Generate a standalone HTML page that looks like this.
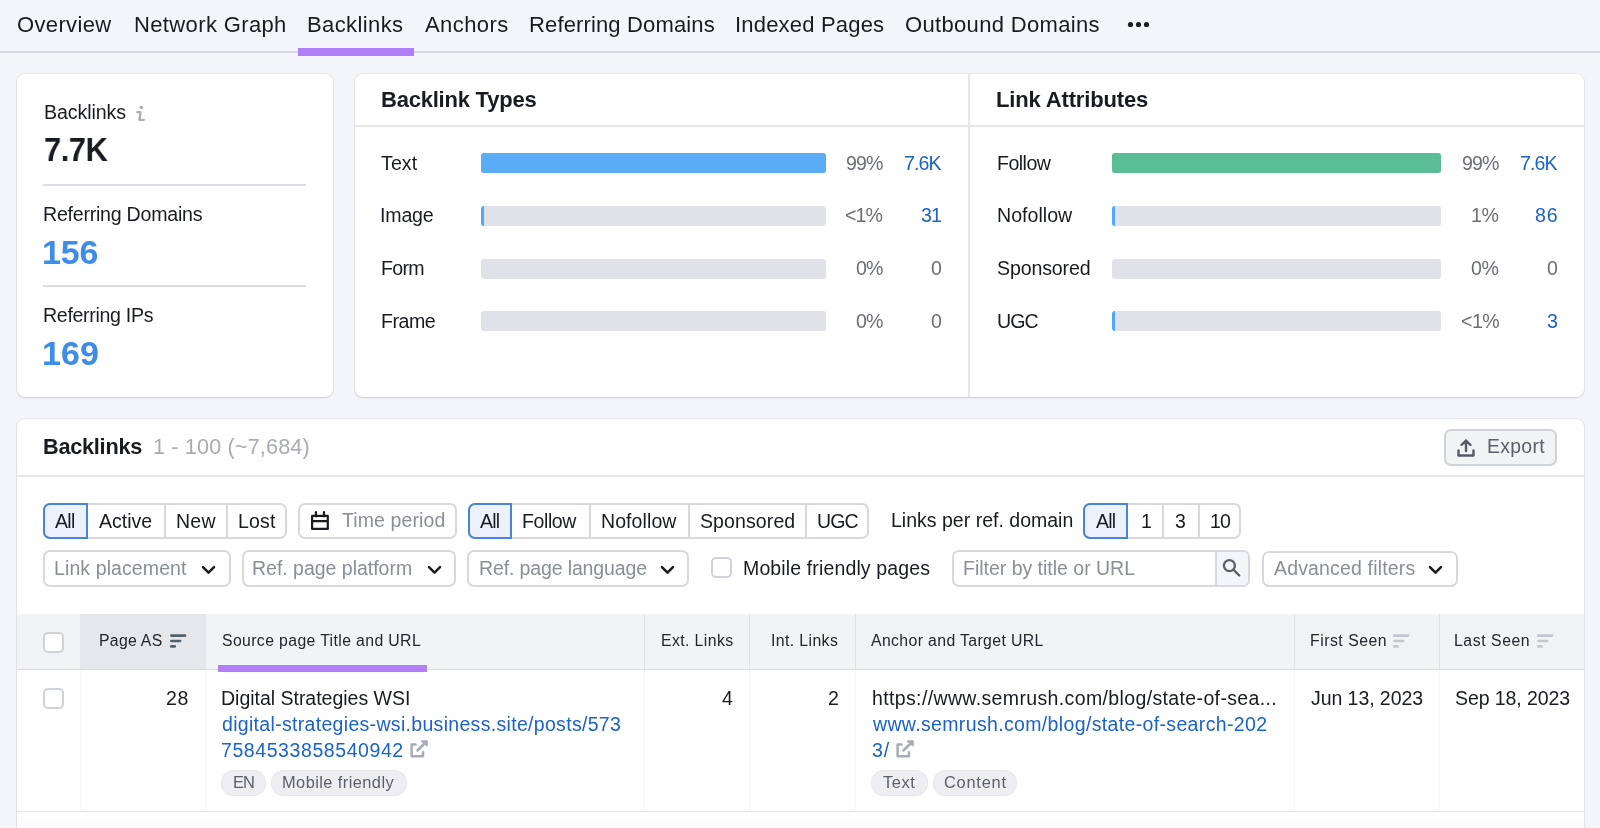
<!DOCTYPE html>
<html><head><meta charset="utf-8">
<style>
*{box-sizing:border-box;margin:0;padding:0}
html,body{width:1600px;height:828px;overflow:hidden;background:#f4f5f9;font-family:"Liberation Sans",sans-serif;color:#191b23}
.t{position:absolute;white-space:nowrap;will-change:transform}
.a{position:absolute}
.card{position:absolute;background:#fff;border-radius:8px;box-shadow:0 0 0 1px rgba(25,27,35,.05),0 1px 2px rgba(25,27,35,.13)}
.hr{position:absolute;height:2px;background:#dcdde4}
.bar{position:absolute;height:20px;border-radius:3px;background:#e0e1e9;overflow:hidden}
.bar i{position:absolute;left:0;top:0;bottom:0;display:block}
.btn2{position:absolute;background:#f2f3f5;border:2px solid #d0d2d9;border-radius:7px}
.seg{position:absolute;height:36px;border:2px solid #d7d9df;border-radius:7px;background:#fff}
.seg i{position:absolute;top:0;bottom:0;width:2px;background:#d7d9df}
.seg b{position:absolute;top:-2px;bottom:-2px;left:-2px;background:#ebf2fd;border:2px solid #4a82dc;border-radius:7px 0 0 7px}
.box{position:absolute;border:2px solid #d7d9df;border-radius:7px;background:#fff}
.cb{position:absolute;width:21px;height:21px;border:2px solid #d0d2d9;border-radius:5px;background:#fff}
.vl{position:absolute;width:1px;background:#e0e1e9}
.vl2{position:absolute;width:1px;background:#f5f6f8}
.tag{position:absolute;height:26px;border-radius:13px;background:#eeeef2;box-shadow:inset 0 0 0 1px #e6e7ec}

</style></head><body>
<div class="a" style="left:0;top:51px;width:1600px;height:2px;background:#d6d8df"></div>
<div class="a" style="left:298px;top:47.5px;width:116px;height:8px;background:#b07ff5"></div>
<svg class="a" style="left:1126.5px;top:20.4px" width="24" height="10"><circle cx="3.5" cy="4.5" r="2.6" fill="#191b23"/><circle cx="11.5" cy="4.5" r="2.6" fill="#191b23"/><circle cx="19.5" cy="4.5" r="2.6" fill="#191b23"/></svg>

<div class="card" style="left:17px;top:74px;width:316px;height:323px"></div>
<svg class="a" style="left:134px;top:104px" width="14" height="18" viewBox="0 0 14 18"><circle cx="7.3" cy="3.4" r="1.75" fill="#a9abb6"/><path d="M3.4 8.2H6.5L5.5 15.8H9.9" fill="none" stroke="#a9abb6" stroke-width="2.3" stroke-linecap="round" stroke-linejoin="round"/></svg>
<div class="hr" style="left:43px;top:184px;width:263px"></div>
<div class="hr" style="left:43px;top:285px;width:263px"></div>

<div class="card" style="left:355px;top:74px;width:1229px;height:323px"></div>
<div class="a" style="left:355px;top:125px;width:1229px;height:2px;background:#e6e7ee"></div>
<div class="a" style="left:968px;top:74px;width:2px;height:323px;background:#e6e7ee"></div>
<div class="bar" style="left:481px;top:153px;width:345px"><i style="width:100%;background:#5aacf6"></i></div>
<div class="bar" style="left:481px;top:206px;width:345px"><i style="width:3px;background:#4fa8f8"></i></div>
<div class="bar" style="left:481px;top:259px;width:345px"></div>
<div class="bar" style="left:481px;top:311px;width:345px"></div>
<div class="bar" style="left:1112px;top:153px;width:329px"><i style="width:100%;background:#59be96"></i></div>
<div class="bar" style="left:1112px;top:206px;width:329px"><i style="width:3px;background:#4fa8f8"></i></div>
<div class="bar" style="left:1112px;top:259px;width:329px"></div>
<div class="bar" style="left:1112px;top:311px;width:329px"><i style="width:3px;background:#4fa8f8"></i></div>

<div class="card" style="left:17px;top:419px;width:1567px;height:420px"></div>
<div class="a" style="left:17px;top:475px;width:1567px;height:2px;background:#e6e7ee"></div>
<div class="btn2" style="left:1444px;top:429px;width:113px;height:37px"></div>
<svg class="a" style="left:1456px;top:437px" width="20" height="21" viewBox="0 0 20 21"><path d="M10 14V3.5M5.5 8L10 3.5 14.5 8M2.5 13.5v5h15v-5" fill="none" stroke="#555a66" stroke-width="2.4" stroke-linecap="round" stroke-linejoin="round"/></svg>

<div class="seg" style="left:43px;top:503px;width:244px"><b style="width:45px"></b><i style="left:118.6px"></i><i style="left:180.5px"></i></div>
<div class="box" style="left:298px;top:503px;width:159px;height:36px"></div>
<svg class="a" style="left:310px;top:509px" width="20" height="23" viewBox="0 0 20 23"><path d="M2.1 6.9H17.8V19.9H2.1ZM2.1 12.1H17.8" fill="none" stroke="#191b23" stroke-width="2.2" stroke-linejoin="round"/><path d="M5.9 3v4.5M14 3v4.5" stroke="#191b23" stroke-width="2.2" stroke-linecap="round"/></svg>
<div class="seg" style="left:468px;top:503px;width:401px"><b style="width:44px"></b><i style="left:119.3px"></i><i style="left:218.1px"></i><i style="left:334.7px"></i></div>
<div class="seg" style="left:1083px;top:503px;width:158px"><b style="width:45px"></b><i style="left:77.4px"></i><i style="left:112.8px"></i></div>

<div class="box" style="left:43px;top:550px;width:188px;height:37px"></div>
<svg class="a" style="left:201px;top:565px" width="15" height="10" viewBox="0 0 15 10"><path d="M2 2.2l5.5 5.5L13 2.2" fill="none" stroke="#191b23" stroke-width="2.5" stroke-linecap="round" stroke-linejoin="round"/></svg>
<div class="box" style="left:242px;top:550px;width:214px;height:37px"></div>
<svg class="a" style="left:427px;top:565px" width="15" height="10" viewBox="0 0 15 10"><path d="M2 2.2l5.5 5.5L13 2.2" fill="none" stroke="#191b23" stroke-width="2.5" stroke-linecap="round" stroke-linejoin="round"/></svg>
<div class="box" style="left:467px;top:550px;width:222px;height:37px"></div>
<svg class="a" style="left:660px;top:565px" width="15" height="10" viewBox="0 0 15 10"><path d="M2 2.2l5.5 5.5L13 2.2" fill="none" stroke="#191b23" stroke-width="2.5" stroke-linecap="round" stroke-linejoin="round"/></svg>
<div class="cb" style="left:711px;top:557px"></div>
<div class="box" style="left:952px;top:550px;width:298px;height:37px;overflow:hidden"><div style="position:absolute;left:261px;top:0;bottom:0;right:0;background:#f4f5f9;border-left:2px solid #d7d9df"></div></div>
<svg class="a" style="left:1220px;top:556px" width="24" height="24" viewBox="0 0 24 24"><circle cx="9.4" cy="9.6" r="5.5" fill="none" stroke="#5c606c" stroke-width="2.3"/><path d="M13.6 13.8L19.3 19.5" stroke="#5c606c" stroke-width="2.4" stroke-linecap="round"/></svg>
<div class="box" style="left:1262px;top:551px;width:196px;height:36px"></div>
<svg class="a" style="left:1428px;top:565px" width="15" height="10" viewBox="0 0 15 10"><path d="M2 2.2l5.5 5.5L13 2.2" fill="none" stroke="#191b23" stroke-width="2.5" stroke-linecap="round" stroke-linejoin="round"/></svg>

<div class="a" style="left:17px;top:614px;width:1567px;height:55px;background:#f2f3f5"></div>
<div class="a" style="left:80px;top:614px;width:126px;height:55px;background:#e6e7ea"></div>
<div class="a" style="left:17px;top:669px;width:1567px;height:1px;background:#d9dbe2"></div>
<div class="vl" style="left:644px;top:614px;height:55px"></div>
<div class="vl" style="left:749px;top:614px;height:55px"></div>
<div class="vl" style="left:855px;top:614px;height:55px"></div>
<div class="vl" style="left:1294px;top:614px;height:55px"></div>
<div class="vl" style="left:1439px;top:614px;height:55px"></div>
<div class="cb" style="left:43px;top:632px"></div>
<svg class="a" style="left:170px;top:634px" width="17" height="14" viewBox="0 0 17 14"><path d="M1.3 1.6h13.8M1.3 7h8.8M1.3 12.4h3.4" stroke="#52616b" stroke-width="2.6" stroke-linecap="round"/></svg>
<div class="a" style="left:218px;top:665px;width:209px;height:7px;background:#b07ff5"></div>
<svg class="a" style="left:1393px;top:634px" width="17" height="14" viewBox="0 0 17 14"><path d="M1.3 1.6h13.8M1.3 7h8.8M1.3 12.4h3.4" stroke="#c4c7cf" stroke-width="2.6" stroke-linecap="round"/></svg>
<svg class="a" style="left:1537px;top:634px" width="17" height="14" viewBox="0 0 17 14"><path d="M1.3 1.6h13.8M1.3 7h8.8M1.3 12.4h3.4" stroke="#c4c7cf" stroke-width="2.6" stroke-linecap="round"/></svg>

<div class="vl2" style="left:80px;top:670px;height:158px"></div>
<div class="vl2" style="left:205px;top:670px;height:158px"></div>
<div class="vl2" style="left:644px;top:670px;height:158px"></div>
<div class="vl2" style="left:749px;top:670px;height:158px"></div>
<div class="vl2" style="left:855px;top:670px;height:158px"></div>
<div class="vl2" style="left:1294px;top:670px;height:158px"></div>
<div class="vl2" style="left:1439px;top:670px;height:158px"></div>
<div class="cb" style="left:43px;top:688px"></div>
<svg class="a" style="left:408px;top:738px" width="22" height="22" viewBox="0 0 22 22"><path d="M7.5 6.5H3.6V18.2H15V14.3M9.4 12.5L18.6 3.5M14.3 3.5H18.6V7" fill="none" stroke="#a9abb6" stroke-width="2.5" stroke-linecap="round" stroke-linejoin="round"/></svg>
<div class="tag" style="left:221px;top:770px;width:45px"></div>
<div class="tag" style="left:271px;top:770px;width:136px"></div>
<svg class="a" style="left:893.5px;top:738px" width="22" height="22" viewBox="0 0 22 22"><path d="M7.5 6.5H3.6V18.2H15V14.3M9.4 12.5L18.6 3.5M14.3 3.5H18.6V7" fill="none" stroke="#a9abb6" stroke-width="2.5" stroke-linecap="round" stroke-linejoin="round"/></svg>
<div class="tag" style="left:871px;top:770px;width:57px"></div>
<div class="tag" style="left:933px;top:770px;width:84px"></div>
<div class="a" style="left:17px;top:811px;width:1567px;height:1.5px;background:#e3e5ea"></div>
<div class="a" style="left:17px;top:812px;width:1567px;height:16px;background:linear-gradient(#fff,#fafafb)"></div>

<div class="t" id="nav0" style="left:16.50px;top:8.88px;font-size:22.00px;line-height:31px;letter-spacing:0.357px;color:#191b23;">Overview</div>
<div class="t" id="nav1" style="left:133.77px;top:8.88px;font-size:22.00px;line-height:31px;letter-spacing:0.367px;color:#191b23;">Network Graph</div>
<div class="t" id="nav2" style="left:307.00px;top:8.88px;font-size:22.00px;line-height:31px;letter-spacing:0.400px;color:#191b23;">Backlinks</div>
<div class="t" id="nav3" style="left:425.00px;top:8.88px;font-size:22.00px;line-height:31px;letter-spacing:0.417px;color:#191b23;">Anchors</div>
<div class="t" id="nav4" style="left:529.00px;top:8.88px;font-size:22.00px;line-height:31px;letter-spacing:0.141px;color:#191b23;">Referring Domains</div>
<div class="t" id="nav5" style="left:734.67px;top:8.88px;font-size:22.00px;line-height:31px;letter-spacing:0.192px;color:#191b23;">Indexed Pages</div>
<div class="t" id="nav6" style="left:905.00px;top:8.88px;font-size:22.00px;line-height:31px;letter-spacing:0.333px;color:#191b23;">Outbound Domains</div>
<div class="t" id="lc1" style="left:43.58px;top:99.01px;font-size:19.60px;line-height:27px;letter-spacing:-0.088px;color:#191b23;">Backlinks</div>
<div class="t" id="lc2" style="left:43.50px;top:124.82px;font-size:34.00px;line-height:48px;letter-spacing:-0.500px;transform:scaleX(0.9080);transform-origin:0 0;font-weight:bold;color:#191b23;">7.7K</div>
<div class="t" id="lc3" style="left:43.17px;top:200.71px;font-size:19.60px;line-height:27px;letter-spacing:-0.244px;color:#191b23;">Referring Domains</div>
<div class="t" id="lc4" style="left:42.25px;top:227.97px;font-size:34.00px;line-height:48px;letter-spacing:-0.125px;font-weight:bold;color:#3d8ce8;">156</div>
<div class="t" id="lc5" style="left:43.17px;top:301.61px;font-size:19.60px;line-height:27px;letter-spacing:-0.325px;color:#191b23;">Referring IPs</div>
<div class="t" id="lc6" style="left:42.25px;top:329.47px;font-size:34.00px;line-height:48px;letter-spacing:0.125px;font-weight:bold;color:#3d8ce8;">169</div>
<div class="t" id="ct1" style="left:380.50px;top:83.98px;font-size:22.00px;line-height:31px;letter-spacing:-0.223px;font-weight:bold;color:#191b23;">Backlink Types</div>
<div class="t" id="ct2" style="left:995.75px;top:83.98px;font-size:22.00px;line-height:31px;letter-spacing:-0.154px;font-weight:bold;color:#191b23;">Link Attributes</div>
<div class="t" id="cl0" style="left:380.75px;top:149.71px;font-size:19.60px;line-height:27px;letter-spacing:0.083px;color:#191b23;">Text</div>
<div class="t" id="cl1" style="left:379.75px;top:202.21px;font-size:19.60px;line-height:27px;letter-spacing:-0.188px;color:#191b23;">Image</div>
<div class="t" id="cl2" style="left:381.07px;top:255.31px;font-size:19.60px;line-height:27px;letter-spacing:-0.733px;color:#191b23;">Form</div>
<div class="t" id="cl3" style="left:381.07px;top:307.71px;font-size:19.60px;line-height:27px;letter-spacing:-0.500px;color:#191b23;">Frame</div>
<div class="t" id="cr0" style="left:996.77px;top:149.71px;font-size:19.60px;line-height:27px;letter-spacing:-0.540px;color:#191b23;">Follow</div>
<div class="t" id="cr1" style="left:996.77px;top:202.21px;font-size:19.60px;line-height:27px;letter-spacing:0.014px;color:#191b23;">Nofollow</div>
<div class="t" id="cr2" style="left:996.77px;top:255.31px;font-size:19.60px;line-height:27px;letter-spacing:-0.150px;color:#191b23;">Sponsored</div>
<div class="t" id="cr3" style="left:996.77px;top:307.71px;font-size:19.60px;line-height:27px;letter-spacing:-0.900px;color:#191b23;">UGC</div>
<div class="t" id="pl0" style="left:846.28px;top:149.71px;font-size:19.60px;line-height:27px;letter-spacing:-0.900px;color:#6c6e79;">99%</div>
<div class="t" id="pl1" style="left:844.97px;top:202.21px;font-size:19.60px;line-height:27px;letter-spacing:-0.900px;color:#6c6e79;">&lt;1%</div>
<div class="t" id="pl2" style="left:856.08px;top:255.31px;font-size:19.60px;line-height:27px;letter-spacing:-0.900px;color:#6c6e79;">0%</div>
<div class="t" id="pl3" style="left:856.08px;top:307.71px;font-size:19.60px;line-height:27px;letter-spacing:-0.900px;color:#6c6e79;">0%</div>
<div class="t" id="nl0" style="left:904.47px;top:149.71px;font-size:19.60px;line-height:27px;letter-spacing:-0.900px;color:#1a62cc;">7.6K</div>
<div class="t" id="nl1" style="left:921.28px;top:202.21px;font-size:19.60px;line-height:27px;letter-spacing:-0.900px;color:#1a62cc;">31</div>
<div class="t" id="nl2" style="left:930.78px;top:255.31px;font-size:19.60px;line-height:27px;letter-spacing:-0.493px;color:#6c6e79;">0</div>
<div class="t" id="nl3" style="left:930.78px;top:307.71px;font-size:19.60px;line-height:27px;letter-spacing:-0.493px;color:#6c6e79;">0</div>
<div class="t" id="pr0" style="left:1462.09px;top:149.71px;font-size:19.60px;line-height:27px;letter-spacing:-0.900px;color:#6c6e79;">99%</div>
<div class="t" id="pr1" style="left:1470.67px;top:202.21px;font-size:19.60px;line-height:27px;letter-spacing:-0.493px;color:#6c6e79;">1%</div>
<div class="t" id="pr2" style="left:1470.67px;top:255.31px;font-size:19.60px;line-height:27px;letter-spacing:-0.493px;color:#6c6e79;">0%</div>
<div class="t" id="pr3" style="left:1460.67px;top:307.71px;font-size:19.60px;line-height:27px;letter-spacing:-0.493px;color:#6c6e79;">&lt;1%</div>
<div class="t" id="nr0" style="left:1519.59px;top:149.71px;font-size:19.60px;line-height:27px;letter-spacing:-0.900px;color:#1a62cc;">7.6K</div>
<div class="t" id="nr1" style="left:1535.37px;top:202.21px;font-size:19.60px;line-height:27px;letter-spacing:0.900px;color:#1a62cc;">86</div>
<div class="t" id="nr2" style="left:1546.67px;top:255.31px;font-size:19.60px;line-height:27px;letter-spacing:-0.493px;color:#6c6e79;">0</div>
<div class="t" id="nr3" style="left:1546.67px;top:307.71px;font-size:19.60px;line-height:27px;letter-spacing:-0.493px;color:#1a62cc;">3</div>
<div class="t" id="bh1" style="left:43.00px;top:431.88px;font-size:21.70px;line-height:30px;letter-spacing:-0.250px;font-weight:bold;color:#191b23;">Backlinks</div>
<div class="t" id="bh2" style="left:152.77px;top:431.88px;font-size:21.70px;line-height:30px;letter-spacing:0.120px;color:#a9abb6;">1 - 100 (~7,684)</div>
<div class="t" id="exp" style="left:1487.39px;top:432.68px;font-size:19.40px;line-height:27px;letter-spacing:0.320px;color:#5c5f6b;">Export</div>
<div class="t" id="s1_0" style="left:55.39px;top:507.54px;font-size:19.50px;line-height:27px;letter-spacing:-0.700px;color:#191b23;">All</div>
<div class="t" id="s1_1" style="left:98.89px;top:507.54px;font-size:19.50px;line-height:27px;letter-spacing:0.020px;color:#191b23;">Active</div>
<div class="t" id="s1_2" style="left:175.57px;top:507.54px;font-size:19.50px;line-height:27px;letter-spacing:0.250px;color:#191b23;">New</div>
<div class="t" id="s1_3" style="left:237.57px;top:507.54px;font-size:19.50px;line-height:27px;letter-spacing:0.200px;color:#191b23;">Lost</div>
<div class="t" id="tp" style="left:342.00px;top:506.84px;font-size:19.50px;line-height:27px;letter-spacing:0.100px;color:#8a8e9b;">Time period</div>
<div class="t" id="s2_0" style="left:480.00px;top:507.54px;font-size:19.50px;line-height:27px;letter-spacing:-0.800px;color:#191b23;">All</div>
<div class="t" id="s2_1" style="left:522.25px;top:507.54px;font-size:19.50px;line-height:27px;letter-spacing:-0.400px;color:#191b23;">Follow</div>
<div class="t" id="s2_2" style="left:600.75px;top:507.54px;font-size:19.50px;line-height:27px;letter-spacing:0.093px;color:#191b23;">Nofollow</div>
<div class="t" id="s2_3" style="left:699.77px;top:507.54px;font-size:19.50px;line-height:27px;letter-spacing:0.112px;color:#191b23;">Sponsored</div>
<div class="t" id="s2_4" style="left:816.50px;top:507.54px;font-size:19.50px;line-height:27px;letter-spacing:-0.900px;color:#191b23;">UGC</div>
<div class="t" id="lprd" style="left:890.50px;top:506.84px;font-size:19.50px;line-height:27px;letter-spacing:0.010px;color:#191b23;">Links per ref. domain</div>
<div class="t" id="s3_0" style="left:1095.77px;top:507.54px;font-size:19.50px;line-height:27px;letter-spacing:-0.800px;color:#191b23;">All</div>
<div class="t" id="s3_1" style="left:1140.50px;top:507.54px;font-size:19.50px;line-height:27px;letter-spacing:-0.019px;color:#191b23;">1</div>
<div class="t" id="s3_2" style="left:1174.77px;top:507.54px;font-size:19.50px;line-height:27px;letter-spacing:-0.019px;color:#191b23;">3</div>
<div class="t" id="s3_3" style="left:1209.58px;top:507.54px;font-size:19.50px;line-height:27px;letter-spacing:-0.900px;color:#191b23;">10</div>
<div class="t" id="f1" style="left:54.17px;top:554.74px;font-size:19.50px;line-height:27px;letter-spacing:0.100px;color:#8a8e9b;">Link placement</div>
<div class="t" id="f2" style="left:252.25px;top:554.74px;font-size:19.50px;line-height:27px;letter-spacing:-0.015px;color:#8a8e9b;">Ref. page platform</div>
<div class="t" id="f3" style="left:478.57px;top:554.74px;font-size:19.50px;line-height:27px;letter-spacing:-0.129px;color:#8a8e9b;">Ref. page language</div>
<div class="t" id="f4" style="left:742.50px;top:554.74px;font-size:19.50px;line-height:27px;letter-spacing:0.135px;color:#191b23;">Mobile friendly pages</div>
<div class="t" id="f5" style="left:962.67px;top:554.74px;font-size:19.50px;line-height:27px;letter-spacing:-0.014px;color:#8a8e9b;">Filter by title or URL</div>
<div class="t" id="f6" style="left:1273.77px;top:554.74px;font-size:19.50px;line-height:27px;letter-spacing:0.160px;color:#8a8e9b;">Advanced filters</div>
<div class="t" id="h1" style="left:99.00px;top:629.53px;font-size:15.80px;line-height:22px;letter-spacing:0.283px;color:#24262d;">Page AS</div>
<div class="t" id="h2" style="left:221.57px;top:629.53px;font-size:15.80px;line-height:22px;letter-spacing:0.375px;color:#24262d;">Source page Title and URL</div>
<div class="t" id="h3" style="left:661.17px;top:629.53px;font-size:15.80px;line-height:22px;letter-spacing:0.400px;color:#24262d;">Ext. Links</div>
<div class="t" id="h4" style="left:771.17px;top:629.53px;font-size:15.80px;line-height:22px;letter-spacing:0.400px;color:#24262d;">Int. Links</div>
<div class="t" id="h5" style="left:871.39px;top:629.53px;font-size:15.80px;line-height:22px;letter-spacing:0.375px;color:#24262d;">Anchor and Target URL</div>
<div class="t" id="h6" style="left:1309.67px;top:629.53px;font-size:15.80px;line-height:22px;letter-spacing:0.511px;color:#24262d;">First Seen</div>
<div class="t" id="h7" style="left:1454.39px;top:629.53px;font-size:15.80px;line-height:22px;letter-spacing:0.562px;color:#24262d;">Last Seen</div>
<div class="t" id="r1" style="left:166.48px;top:684.54px;font-size:19.50px;line-height:27px;letter-spacing:0.700px;color:#191b23;">28</div>
<div class="t" id="r2" style="left:221.00px;top:684.54px;font-size:19.50px;line-height:27px;letter-spacing:-0.014px;color:#191b23;">Digital Strategies WSI</div>
<div class="t" id="r3" style="left:221.50px;top:710.94px;font-size:19.50px;line-height:27px;letter-spacing:0.313px;color:#1a62cc;">digital-strategies-wsi.business.site/posts/573</div>
<div class="t" id="r4" style="left:221.00px;top:737.24px;font-size:19.50px;line-height:27px;letter-spacing:0.580px;color:#1a62cc;">7584533858540942</div>
<div class="t" id="r5" style="left:722.00px;top:684.54px;font-size:19.50px;line-height:27px;letter-spacing:-0.019px;color:#191b23;">4</div>
<div class="t" id="r6" style="left:828.00px;top:684.54px;font-size:19.50px;line-height:27px;letter-spacing:-0.019px;color:#191b23;">2</div>
<div class="t" id="r7" style="left:871.77px;top:684.54px;font-size:19.50px;line-height:27px;letter-spacing:0.365px;color:#191b23;">https://www.semrush.com/blog/state-of-sea...</div>
<div class="t" id="r8" style="left:872.77px;top:710.94px;font-size:19.50px;line-height:27px;letter-spacing:0.349px;color:#1a62cc;">www.semrush.com/blog/state-of-search-202</div>
<div class="t" id="r9" style="left:872.00px;top:737.24px;font-size:19.50px;line-height:27px;letter-spacing:0.800px;color:#1a62cc;">3/</div>
<div class="t" id="r10" style="left:1311.37px;top:684.54px;font-size:19.50px;line-height:27px;letter-spacing:-0.064px;color:#191b23;">Jun 13, 2023</div>
<div class="t" id="r11" style="left:1454.89px;top:684.54px;font-size:19.50px;line-height:27px;letter-spacing:-0.073px;color:#191b23;">Sep 18, 2023</div>
<div class="t" id="g1" style="left:233.07px;top:770.82px;font-size:16.40px;line-height:23px;letter-spacing:-0.900px;color:#5c5f6b;">EN</div>
<div class="t" id="g2" style="left:282.39px;top:770.82px;font-size:16.40px;line-height:23px;letter-spacing:0.429px;color:#5c5f6b;">Mobile friendly</div>
<div class="t" id="g3" style="left:883.17px;top:770.82px;font-size:16.40px;line-height:23px;letter-spacing:0.600px;color:#5c5f6b;">Text</div>
<div class="t" id="g4" style="left:943.50px;top:770.82px;font-size:16.40px;line-height:23px;letter-spacing:0.767px;color:#5c5f6b;">Content</div>
</body></html>
